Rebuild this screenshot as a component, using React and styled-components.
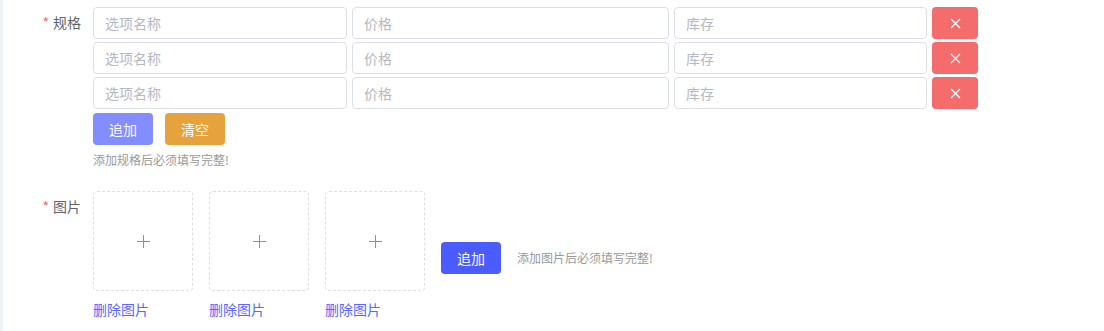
import React, { useState } from 'react';
import styled, { createGlobalStyle } from 'styled-components';

const GlobalStyle = createGlobalStyle`
  body {
    margin: 0;
    background: #fff;
    font-family: "Noto Sans CJK SC", "Noto Sans", sans-serif;
    font-size: 14px;
    color: #606266;
  }
`;

const Page = styled.div`
  display: flex;
  min-height: 331px;
`;

const SideEdge = styled.div`
  width: 3px;
  background: #f0f2f5;
  flex-shrink: 0;
`;

const Main = styled.div`
  flex: 1;
  padding-top: 7px;
`;

const FormItem = styled.div`
  display: flex;
  align-items: flex-start;
  margin-bottom: ${p => p.$gap || 0}px;
`;

const Label = styled.label`
  width: 90px;
  padding-right: 12px;
  box-sizing: border-box;
  text-align: right;
  line-height: 31px;
  font-size: 14px;
  color: #606266;
  flex-shrink: 0;

  &::before {
    content: '*';
    color: #f56c6c;
    margin-right: 4px;
  }
`;

const Content = styled.div`
  display: flex;
  flex-direction: column;
`;

const SpecRow = styled.div`
  display: flex;
  gap: 5px;
  margin-bottom: 3px;
`;

const Input = styled.input`
  width: ${p => p.$w}px;
  height: 32px;
  box-sizing: border-box;
  border: 1px solid #dcdfe6;
  border-radius: 4px;
  padding: 0 11px;
  font-family: inherit;
  font-size: 14px;
  color: #606266;
  outline: none;

  &::placeholder {
    color: #b4b8c0;
  }
`;

const Button = styled.button`
  height: 32px;
  width: ${p => p.$w || 60}px;
  border: none;
  border-radius: 4px;
  background: ${p => p.$bg};
  color: #fff;
  font-family: inherit;
  font-size: 14px;
  padding: 0;
  cursor: pointer;
  display: flex;
  align-items: center;
  justify-content: center;
  flex-shrink: 0;
`;

const ButtonRow = styled.div`
  display: flex;
  gap: 12px;
  margin-top: 1px;
`;

const Hint = styled.div`
  font-size: 12px;
  line-height: 20px;
  color: #999;
  margin-top: ${p => p.$top || 0}px;
`;

const Pictures = styled.div`
  display: flex;
  align-items: flex-start;
  gap: 16px;
`;

const PicItem = styled.div`
  display: flex;
  flex-direction: column;
`;

const UploadBox = styled.div`
  width: 100px;
  height: 100px;
  box-sizing: border-box;
  border: 1px dashed #dcdfe6;
  border-radius: 4px;
  display: flex;
  align-items: center;
  justify-content: center;
  cursor: pointer;
`;

const RemoveLink = styled.a`
  margin-top: 8px;
  line-height: 20px;
  font-size: 14px;
  color: #5a67ff;
  cursor: pointer;
`;

const PicActions = styled.div`
  display: flex;
  align-items: center;
  gap: 16px;
  margin-top: 51px;
`;

const CloseIcon = () => (
  <svg width="11" height="11" viewBox="0 0 11 11">
    <path d="M1 1L10 10M10 1L1 10" stroke="#fff" strokeWidth="1.3" />
  </svg>
);

const PlusIcon = () => (
  <svg width="13" height="13" viewBox="0 0 13 13">
    <path d="M6.5 0V13M0 6.5H13" stroke="#8c939d" strokeWidth="1" />
  </svg>
);

export default function App() {
  const [specs] = useState([0, 1, 2]);
  const [pics] = useState([0, 1, 2]);

  return (
    <>
      <GlobalStyle />
      <Page>
        <SideEdge />
        <Main>
          <FormItem $gap={21}>
            <Label>规格</Label>
            <Content>
              {specs.map(i => (
                <SpecRow key={i}>
                  <Input $w={254} placeholder="选项名称" />
                  <Input $w={317} placeholder="价格" />
                  <Input $w={253} placeholder="库存" />
                  <Button $w={46} $bg="#f56c6c"><CloseIcon /></Button>
                </SpecRow>
              ))}
              <ButtonRow>
                <Button $bg="#848dff">追加</Button>
                <Button $bg="#e6a23c">清空</Button>
              </ButtonRow>
              <Hint $top={5}>添加规格后必须填写完整!</Hint>
            </Content>
          </FormItem>
          <FormItem>
            <Label>图片</Label>
            <Pictures>
              {pics.map(i => (
                <PicItem key={i}>
                  <UploadBox><PlusIcon /></UploadBox>
                  <RemoveLink>删除图片</RemoveLink>
                </PicItem>
              ))}
              <PicActions>
                <Button $bg="#4b5cff">追加</Button>
                <Hint>添加图片后必须填写完整!</Hint>
              </PicActions>
            </Pictures>
          </FormItem>
        </Main>
      </Page>
    </>
  );
}
